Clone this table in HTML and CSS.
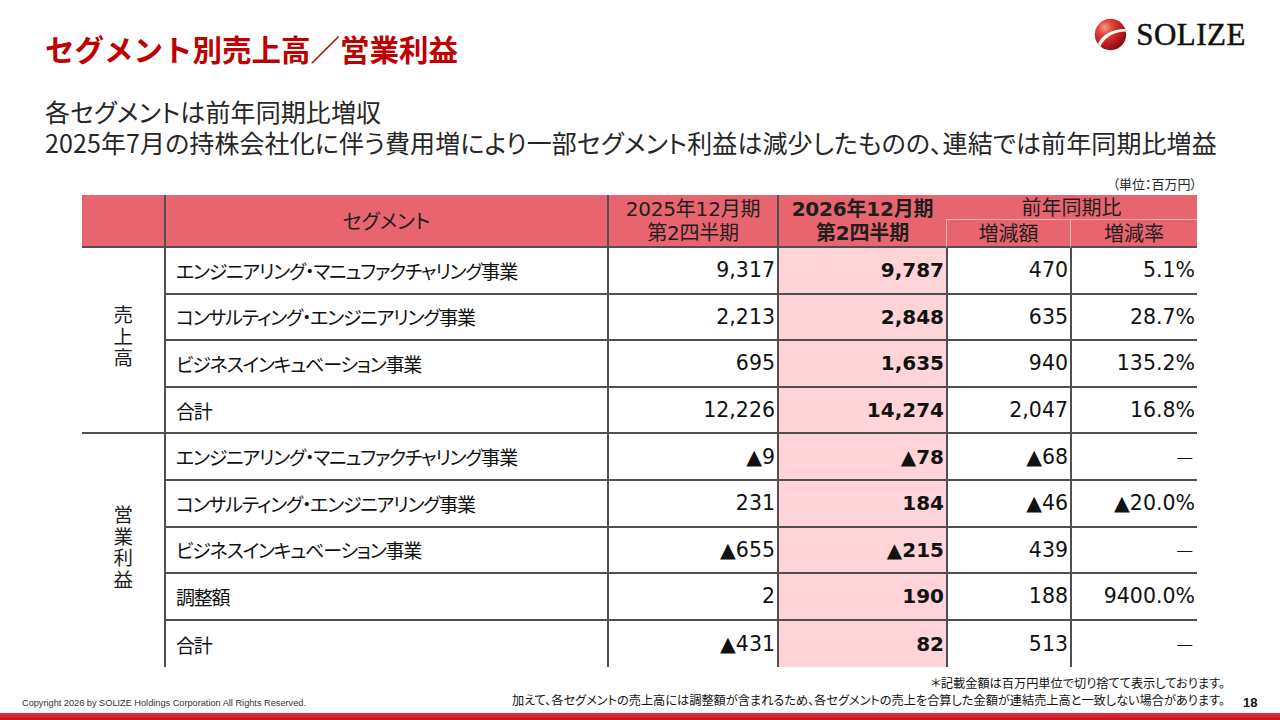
FILE: index.html
```html
<!DOCTYPE html>
<html lang="ja">
<head>
<meta charset="utf-8">
<title>セグメント別売上高／営業利益</title>
<link rel="stylesheet" href="styles.css">
</head>
<body>
<div class="page">
  <header class="top">
    <h1 class="title">セグメント別売上高／営業利益</h1>
    <div class="logo">
      <svg class="logo-mark" viewBox="0 0 40 40" width="33" height="33" aria-hidden="true">
        <defs>
          <radialGradient id="sg" cx="0.32" cy="0.28" r="0.8">
            <stop offset="0" stop-color="#f59a86"/>
            <stop offset="0.3" stop-color="#e0443a"/>
            <stop offset="0.7" stop-color="#b8191a"/>
            <stop offset="1" stop-color="#7d0a0a"/>
          </radialGradient>
          <clipPath id="sc"><circle cx="20" cy="20" r="19"/></clipPath>
        </defs>
        <circle cx="20" cy="20" r="19" fill="url(#sg)"/>
        <path d="M4 33 C 9 21, 21 13, 40 13.5 L 40 16.5 C 24 16.5, 13 23, 7 36 Z" fill="#fff" clip-path="url(#sc)"/>
      </svg>
      <span class="logo-text">SOLIZE</span>
    </div>
  </header>

  <div class="lead">
    <p>各セグメントは前年同期比増収</p>
    <p>2025年7月の持株会社化に伴う費用増により一部セグメント利益は減少したものの、連結では前年同期比増益</p>
  </div>

  <div class="unit">（単位：百万円）</div>

  <table class="seg-table">
    <colgroup>
      <col class="c-lbl">
      <col class="c-name">
      <col class="c-p25">
      <col class="c-p26">
      <col class="c-d1">
      <col class="c-d2">
    </colgroup>
    <thead>
      <tr class="h1">
        <th class="h-lbl" rowspan="2"></th>
        <th class="h-seg" rowspan="2">セグメント</th>
        <th class="h-per" rowspan="2">2025年12月期<br>第2四半期</th>
        <th class="h-per h-cur" rowspan="2">2026年12月期<br>第2四半期</th>
        <th class="h-yoy" colspan="2">前年同期比</th>
      </tr>
      <tr class="h2">
        <th class="h-sub">増減額</th>
        <th class="h-sub">増減率</th>
      </tr>
    </thead>
    <tbody>
      <tr>
        <td class="lbl sep" rowspan="4"><span class="vt">売上高</span></td>
        <td class="name">エンジニアリング・マニュファクチャリング事業</td>
        <td class="num">9,317</td>
        <td class="num cur">9,787</td>
        <td class="num">470</td>
        <td class="num">5.1%</td>
      </tr>
      <tr>
        <td class="name">コンサルティング・エンジニアリング事業</td>
        <td class="num">2,213</td>
        <td class="num cur">2,848</td>
        <td class="num">635</td>
        <td class="num">28.7%</td>
      </tr>
      <tr>
        <td class="name">ビジネスインキュベーション事業</td>
        <td class="num">695</td>
        <td class="num cur">1,635</td>
        <td class="num">940</td>
        <td class="num">135.2%</td>
      </tr>
      <tr>
        <td class="name">合計</td>
        <td class="num">12,226</td>
        <td class="num cur">14,274</td>
        <td class="num">2,047</td>
        <td class="num">16.8%</td>
      </tr>
      <tr>
        <td class="lbl" rowspan="5"><span class="vt">営業利益</span></td>
        <td class="name">エンジニアリング・マニュファクチャリング事業</td>
        <td class="num">▲9</td>
        <td class="num cur">▲78</td>
        <td class="num">▲68</td>
        <td class="num dash">－</td>
      </tr>
      <tr>
        <td class="name">コンサルティング・エンジニアリング事業</td>
        <td class="num">231</td>
        <td class="num cur">184</td>
        <td class="num">▲46</td>
        <td class="num">▲20.0%</td>
      </tr>
      <tr>
        <td class="name">ビジネスインキュベーション事業</td>
        <td class="num">▲655</td>
        <td class="num cur">▲215</td>
        <td class="num">439</td>
        <td class="num dash">－</td>
      </tr>
      <tr>
        <td class="name">調整額</td>
        <td class="num">2</td>
        <td class="num cur">190</td>
        <td class="num">188</td>
        <td class="num">9400.0%</td>
      </tr>
      <tr class="last">
        <td class="name">合計</td>
        <td class="num">▲431</td>
        <td class="num cur">82</td>
        <td class="num">513</td>
        <td class="num dash">－</td>
      </tr>
    </tbody>
  </table>

  <footer class="foot">
    <div class="copy">Copyright 2026 by SOLIZE Holdings Corporation All Rights Reserved.</div>
    <div class="notes">
      <p>＊記載金額は百万円単位で切り捨てて表示しております。</p>
      <p>加えて、各セグメントの売上高には調整額が含まれるため、各セグメントの売上を合算した金額が連結売上高と一致しない場合があります。</p>
    </div>
    <div class="pnum">18</div>
  </footer>
  <div class="bar"></div>
</div>
</body>
</html>
```

FILE: styles.css
```css
html, body {
  margin: 0;
  padding: 0;
  background: #ffffff;
}

.page {
  width: 1280px;
  height: 720px;
  overflow: hidden;
  display: flex;
  flex-direction: column;
  font-family: "Noto Sans CJK JP", sans-serif;
  font-feature-settings: "palt";
  color: #262626;
}

/* ---------- header ---------- */
.top {
  height: 94px;
  flex: none;
  display: flex;
  justify-content: space-between;
  align-items: flex-start;
  padding: 0 34px 0 45px;
}

.title {
  margin: 28px 0 0;
  font-size: 29.5px;
  line-height: 40px;
  font-weight: 700;
  color: #c00000;
  font-feature-settings: normal;
  letter-spacing: 0;
}

.logo {
  margin-top: 18px;
  display: flex;
  align-items: center;
  gap: 9px;
}

.logo-mark {
  display: block;
}

.logo-text {
  font-family: "Liberation Serif", serif;
  font-feature-settings: normal;
  font-size: 31px;
  line-height: 33px;
  color: #111111;
  letter-spacing: 0.5px;
  -webkit-text-stroke: 0.5px #111111;
}

/* ---------- lead text ---------- */
.lead {
  flex: none;
  padding: 2px 0 0 45px;
  height: 62px;
  font-size: 25px;
  line-height: 31px;
  color: #262626;
}

.lead p {
  margin: 0;
  white-space: nowrap;
  letter-spacing: 0.1px;
}

.unit {
  flex: none;
  margin: 17px 0 2px;
  padding-right: 83px;
  text-align: right;
  font-size: 13px;
  line-height: 18px;
  color: #262626;
}

/* ---------- table ---------- */
.seg-table {
  flex: none;
  margin-left: 82px;
  width: 1115px;
  table-layout: fixed;
  border-collapse: separate;
  border-spacing: 0;
  font-family: "DejaVu Sans", "Noto Sans CJK JP", sans-serif;
  font-size: 20.5px;
  color: #111111;
}

.c-lbl { width: 82px; }
.c-name { width: 443px; }
.c-p25 { width: 170px; }
.c-p26 { width: 169px; }
.c-d1 { width: 124px; }
.c-d2 { width: 127px; }

.seg-table th {
  background: #e8656f;
  font-weight: 400;
  font-size: 20px;
  padding: 0;
  text-align: center;
  vertical-align: middle;
  color: #1e1e1e;
  line-height: 24px;
}

.seg-table .h1 { height: 25px; }
.seg-table .h2 { height: 28px; }

.h-lbl {
  border-bottom: 2px solid #505050;
}

.h-seg,
.h-per {
  border-left: 2px solid #505050;
  border-bottom: 2px solid #505050;
  font-family: "Noto Sans CJK JP", sans-serif;
}

.h-per {
  font-family: "DejaVu Sans", "Noto Sans CJK JP", sans-serif;
  letter-spacing: -0.2px;
}

.h-cur {
  font-weight: 700 !important;
}

.h-yoy {
  border-bottom: 1px solid rgba(255, 255, 255, 0.55);
  font-family: "Noto Sans CJK JP", sans-serif;
  line-height: 22px;
}

.h-sub {
  border-left: 1px solid rgba(255, 255, 255, 0.55);
  border-bottom: 2px solid #505050;
  font-family: "Noto Sans CJK JP", sans-serif;
  line-height: 24px;
}

.seg-table tbody tr {
  height: 46.6px;
}

.seg-table td {
  padding: 0;
  vertical-align: middle;
  border-left: 2px solid #505050;
  border-bottom: 2px solid #505050;
  white-space: nowrap;
}

.seg-table td.lbl {
  border-left: none;
  border-bottom: none;
  text-align: center;
  font-family: "Noto Sans CJK JP", sans-serif;
}

.seg-table td.lbl.sep {
  border-bottom: 2px solid #505050;
}

.seg-table tr.last td {
  border-bottom: none;
}

.vt {
  display: inline-block;
  writing-mode: vertical-rl;
  text-orientation: upright;
  font-size: 19.5px;
  line-height: 1;
  letter-spacing: 2px;
  color: #1e1e1e;
}

.name {
  padding-left: 10px !important;
  text-align: left;
  font-family: "Noto Sans CJK JP", sans-serif;
  font-size: 19px !important;
  letter-spacing: -1.2px;
}

.num {
  text-align: right;
  padding-right: 2px !important;
}

.num.cur {
  background: #ffd4d8;
  font-weight: 700;
  font-size: 20px;
}

.num.dash {
  font-family: "Noto Sans CJK JP", sans-serif;
  font-weight: 300;
}

/* ---------- footer ---------- */
.foot {
  flex: none;
  height: 46px;
  display: flex;
  align-items: flex-end;
}

.copy {
  flex: 1;
  padding-left: 22px;
  margin-bottom: 4px;
  font-family: "Liberation Sans", sans-serif;
  font-feature-settings: normal;
  font-size: 9.2px;
  line-height: 12px;
  color: #333333;
}

.notes {
  align-self: flex-start;
  padding-top: 8px;
  text-align: right;
  font-size: 12.2px;
  line-height: 17px;
  color: #111111;
}

.notes p {
  margin: 0;
  white-space: nowrap;
}

.pnum {
  width: 37px;
  padding-left: 18px;
  margin-bottom: 2px;
  font-family: "Liberation Sans", sans-serif;
  font-weight: 700;
  font-size: 13px;
  line-height: 16px;
  color: #111111;
}

.bar {
  flex: none;
  height: 7px;
  margin-top: auto;
  background: linear-gradient(#e2323f, #c70f1d);
}
```
